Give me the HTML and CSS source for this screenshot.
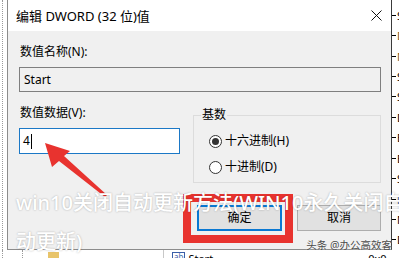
FILE: index.html
```html
<!DOCTYPE html>
<html lang="zh-CN">
<head>
    <meta charset="UTF-8" />
    <title>编辑 DWORD (32 位)值</title>
    <link rel="stylesheet" href="styles.css">
</head>
<body>
    <div class="screen">
        <div class="edge-left"></div>

        <div class="dialog">
            <div class="titlebar">
                <span class="title">编辑 DWORD (32 位)值</span>
                <svg class="close" width="11" height="11" viewBox="0 0 11 11">
                    <path d="M0.5 0.5 L10.5 10.5 M10.5 0.5 L0.5 10.5" stroke="#111" stroke-width="1" fill="none" />
                </svg>
            </div>

            <div class="dialog-body">
                <div class="label">数值名称(N):</div>
                <div class="field readonly">Start</div>

                <div class="row">
                    <div class="col-data">
                        <div class="label">数值数据(V):</div>
                        <div class="field focused">4<span class="caret"></span></div>
                    </div>
                    <fieldset class="base">
                        <legend>基数</legend>
                        <div class="radio first"><span class="dot checked"></span>十六进制(H)</div>
                        <div class="radio"><span class="dot"></span>十进制(D)</div>
                    </fieldset>
                </div>

                <div class="buttons">
                    <div class="btn default">确定</div>
                    <div class="btn">取消</div>
                </div>
            </div>
        </div>

        <div class="edge-right">
            <div class="tree-row"><i></i><span>S</span></div>
            <div class="tree-row"><i></i><span class="key">D</span></div>
            <div class="tree-row"><i></i><span class="key">N</span></div>
            <div class="tree-row"><i></i><span>S</span></div>
            <div class="tree-row"><i></i><span>S</span></div>
            <div class="tree-row"><i></i><span>D</span></div>
            <div class="tree-row"><i></i><span>E</span></div>
            <div class="tree-row"><i></i><span>E</span></div>
            <div class="tree-row"><i></i><span>S</span></div>
            <div class="tree-row"><i></i><span>D</span></div>
            <div class="tree-row"><i></i><span>N</span></div>
            <div class="tree-row"><i></i><span>D</span></div>
        </div>

        <div class="under">
            <span class="dots first"></span>
            <span class="dots second"></span>
            <span class="folder"></span>
            <span class="split"></span>
            <span class="reg-icon">ab</span>
            <span class="reg-name">Start</span>
            <span class="reg-data">0x0</span>
        </div>
    </div>

    <!-- annotations laid over the screenshot -->
    <div class="mark"></div>
    <svg class="arrow" width="399" height="258" viewBox="0 0 399 258">
        <polygon points="45,143 70,151 64,156 107,195 105,197 59,161 52,167" fill="#e8332f" />
    </svg>
    <div class="caption">
        <span>win10关闭自动更新方法(WIN10永久关闭自</span>
        <span>动更新)</span>
    </div>
    <div class="watermark">头条 @办公高效客</div>
</body>
</html>
```

FILE: styles.css
```css
* {
    margin: 0;
    padding: 0;
    box-sizing: border-box;
}
body {
    position: relative;
    width: 399px;
    height: 258px;
    overflow: hidden;
    background: #fff;
    font-family: "Noto Sans", "Noto Sans CJK SC", sans-serif;
    color: #000;
}
.screen {
    display: grid;
    grid-template-columns: 7px 385px 7px;
    grid-template-rows: 250px 8px;
    height: 258px;
}
.edge-left {
    margin-left: 2px;
    border-left: 1px dotted #9a9a9a;
}

/* dialog */
.dialog {
    display: flex;
    flex-direction: column;
    background: #f0f0f0;
    border: 1px solid #8c8c8c;
    border-top: 0;
    border-right-color: #3a3a3a;
}
.titlebar {
    display: flex;
    justify-content: space-between;
    align-items: center;
    height: 31px;
    padding: 0 9px 0 8px;
    background: #fff;
    font-size: 13px;
}
.close {
    display: block;
}
.dialog-body {
    padding: 13px 10px 0 11px;
    font-size: 12px;
    line-height: 16px;
}
.label {
    padding-left: 1px;
}
.field {
    display: flex;
    align-items: center;
    height: 25px;
    margin-top: 7px;
    padding-left: 4px;
    border: 1px solid #7f7f7f;
}
.field.readonly {
    background: #f0f0f0;
}
.field.focused {
    height: 26px;
    padding-left: 3px;
    background: #fff;
    border-color: #1b78c6;
}
.caret {
    width: 1px;
    height: 15px;
    margin-left: 1px;
    background: #000;
}
.row {
    display: flex;
    gap: 13px;
    margin-top: 13px;
}
.col-data {
    width: 161px;
}
.base {
    width: 188px;
    height: 78px;
    padding: 0 0 0 15px;
    border: 1px solid #dcdcdc;
}
.base legend {
    margin-left: -8px;
    padding: 0 1px;
    line-height: 20px;
}
.radio {
    display: flex;
    align-items: center;
    height: 26px;
}
.radio.first {
    margin-top: 3px;
}
.dot {
    display: flex;
    justify-content: center;
    align-items: center;
    width: 13px;
    height: 13px;
    margin-right: 3px;
    border: 1px solid #333;
    border-radius: 50%;
    background: #fff;
}
.dot.checked::after {
    content: "";
    width: 7px;
    height: 7px;
    border-radius: 50%;
    background: #333;
}
.buttons {
    display: flex;
    justify-content: flex-end;
    gap: 15px;
    margin-top: 22px;
}
.btn {
    display: flex;
    justify-content: center;
    align-items: center;
    width: 84px;
    height: 26px;
    border: 1px solid #adadad;
    background: #e1e1e1;
}
.btn.default {
    width: 85px;
    border: 2px solid #0a78d2;
}

/* registry editor behind the dialog */
.edge-right {
    display: flex;
    flex-direction: column;
    padding-top: 5px;
    overflow: hidden;
}
.tree-row {
    display: flex;
    align-items: center;
    height: 21px;
    font-size: 11px;
}
.tree-row i {
    flex: none;
    width: 4px;
    height: 1px;
    background: #000;
}
.tree-row span {
    margin-left: 1px;
}
.tree-row .key {
    color: #7a5a1a;
}
.under {
    grid-column: 1 / 4;
    display: flex;
    align-items: flex-start;
    overflow: hidden;
    font-size: 11px;
    line-height: 14px;
}
.dots {
    width: 1px;
    height: 8px;
    border-left: 1px dotted #9a9a9a;
}
.dots.first {
    margin-left: 2px;
}
.dots.second {
    margin-left: 19px;
}
.folder {
    width: 11px;
    height: 8px;
    margin: 2px 0 0 25px;
    background: #e8c46a;
}
.split {
    width: 1px;
    height: 8px;
    margin-left: 104px;
    background: #c8c8c8;
}
.reg-icon {
    margin: 2px 0 0 8px;
    padding: 0 1px;
    border: 1px solid #3a5fa8;
    color: #3a5fa8;
    font-size: 8px;
    line-height: 8px;
}
.reg-name {
    margin: 2px 0 0 3px;
}
.reg-data {
    margin: 2px 0 0 155px;
}

/* annotations */
.mark {
    position: absolute;
    left: 183px;
    top: 194px;
    width: 110px;
    height: 49px;
    border: 8px solid #e8332f;
}
.arrow {
    position: absolute;
    left: 0;
    top: 0;
}
.caption {
    position: absolute;
    left: 16px;
    top: 183px;
    display: flex;
    flex-direction: column;
    color: #fff;
    font-size: 20px;
    font-weight: 500;
    line-height: 39px;
    white-space: nowrap;
    text-shadow: 0 0 2px rgba(0, 0, 0, 0.3);
}
.watermark {
    position: absolute;
    right: 7px;
    top: 239px;
    color: #4a4a4a;
    font-size: 10.5px;
    line-height: 12px;
    text-shadow: 0 0 2px #fff;
}
```
